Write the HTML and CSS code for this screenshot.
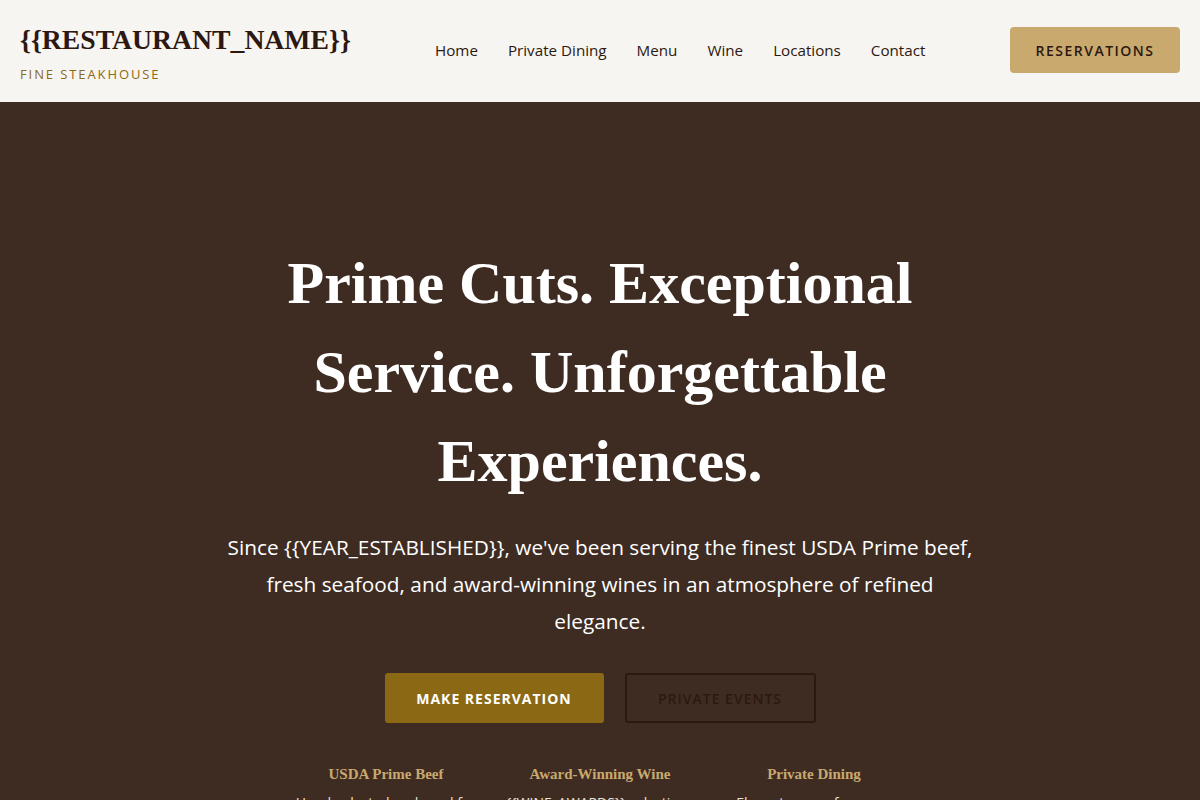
FILE: index.html
```html
<!DOCTYPE html>
<html lang="en">
<head>
<meta charset="utf-8">
<title>{{RESTAURANT_NAME}} - Fine Steakhouse</title>
<link rel="stylesheet" href="styles.css">
</head>
<body>
<header class="site-header">
  <div class="brand">
    <div class="brand-name">{{RESTAURANT_NAME}}</div>
    <div class="brand-tag">FINE STEAKHOUSE</div>
  </div>
  <nav class="main-nav">
    <a href="#">Home</a>
    <a href="#">Private Dining</a>
    <a href="#">Menu</a>
    <a href="#">Wine</a>
    <a href="#">Locations</a>
    <a href="#">Contact</a>
  </nav>
  <a class="btn-reserve" href="#">RESERVATIONS</a>
</header>
<main class="hero">
  <h1 class="hero-title">Prime Cuts. Exceptional Service. Unforgettable Experiences.</h1>
  <p class="hero-sub">Since {{YEAR_ESTABLISHED}}, we've been serving the finest USDA Prime beef, fresh seafood, and award-winning wines in an atmosphere of refined elegance.</p>
  <div class="hero-actions">
    <a class="btn btn-primary" href="#">MAKE RESERVATION</a>
    <a class="btn btn-outline" href="#">PRIVATE EVENTS</a>
  </div>
  <div class="features">
    <div class="feature">
      <h3 class="feature-title">USDA Prime Beef</h3>
      <p class="feature-text">Hand-selected and aged for exceptional flavor</p>
    </div>
    <div class="feature">
      <h3 class="feature-title">Award-Winning Wine</h3>
      <p class="feature-text">{{WINE_AWARDS}} selections from around the world</p>
    </div>
    <div class="feature">
      <h3 class="feature-title">Private Dining</h3>
      <p class="feature-text">Elegant rooms for every occasion</p>
    </div>
  </div>
</main>
</body>
</html>
```
FILE: styles.css
```css
* { box-sizing: border-box; }
html, body { margin: 0; padding: 0; }
body {
  font-family: "Open Sans", "Liberation Sans", sans-serif;
  background: #3e2c23;
  color: #2c1810;
  height: 800px;
  overflow: hidden;
}
a { text-decoration: none; color: inherit; }

.site-header {
  height: 102px;
  background: #f7f5f1;
  display: flex;
  align-items: center;
  padding: 0 20px;
}
.brand { width: 400px; padding-top: 2px; }
.brand-name {
  font-family: "Liberation Serif", "DejaVu Serif", serif;
  font-weight: 700;
  font-size: 27.7px;
  line-height: 36px;
  color: #2c1810;
}
.brand-tag {
  margin-top: 8px;
  font-size: 13px;
  line-height: 16px;
  letter-spacing: 1.9px;
  color: #8b6914;
}
.main-nav {
  display: flex;
  gap: 30px;
  margin-left: 15px;
  margin-top: -2px;
  font-size: 15.2px;
  color: #2c1810;
}
.btn-reserve {
  margin-left: auto;
  margin-top: -2px;
  background: #c9a96e;
  border-radius: 4px;
  height: 46px;
  width: 170px;
  display: flex;
  align-items: center;
  justify-content: center;
  font-size: 14px;
  font-weight: 600;
  letter-spacing: 1.5px;
  color: #2c1810;
}

.hero {
  display: flex;
  flex-direction: column;
  align-items: center;
  padding-top: 137px;
  text-align: center;
}
.hero-title {
  margin: 0;
  max-width: 700px;
  font-family: "Liberation Serif", "DejaVu Serif", serif;
  font-weight: 700;
  font-size: 60px;
  line-height: 89px;
  color: #ffffff;
}
.hero-sub {
  margin: 23px 0 0;
  max-width: 752px;
  font-size: 20.8px;
  line-height: 37px;
  color: #ffffff;
}
.hero-actions {
  display: flex;
  gap: 21px;
  margin-top: 33px;
}
.btn {
  height: 50px;
  display: flex;
  align-items: center;
  justify-content: center;
  border-radius: 3px;
  font-size: 14px;
  font-weight: 700;
  letter-spacing: 1px;
}
.btn-primary {
  width: 219px;
  background: #8b6914;
  color: #ffffff;
}
.btn-outline {
  width: 191px;
  border: 2px solid #2c1810;
  color: #2c1810;
  font-weight: 600;
}

.features {
  display: grid;
  grid-template-columns: repeat(3, 190px);
  gap: 24px;
  margin-top: 40px;
}
.feature-title {
  margin: 0;
  font-family: "Liberation Serif", "DejaVu Serif", serif;
  font-weight: 700;
  font-size: 15px;
  line-height: 22px;
  color: #c9a96e;
}
.feature-text {
  margin: 7px 0 0;
  font-size: 14px;
  line-height: 22px;
  color: #e9e2d8;
}
```
